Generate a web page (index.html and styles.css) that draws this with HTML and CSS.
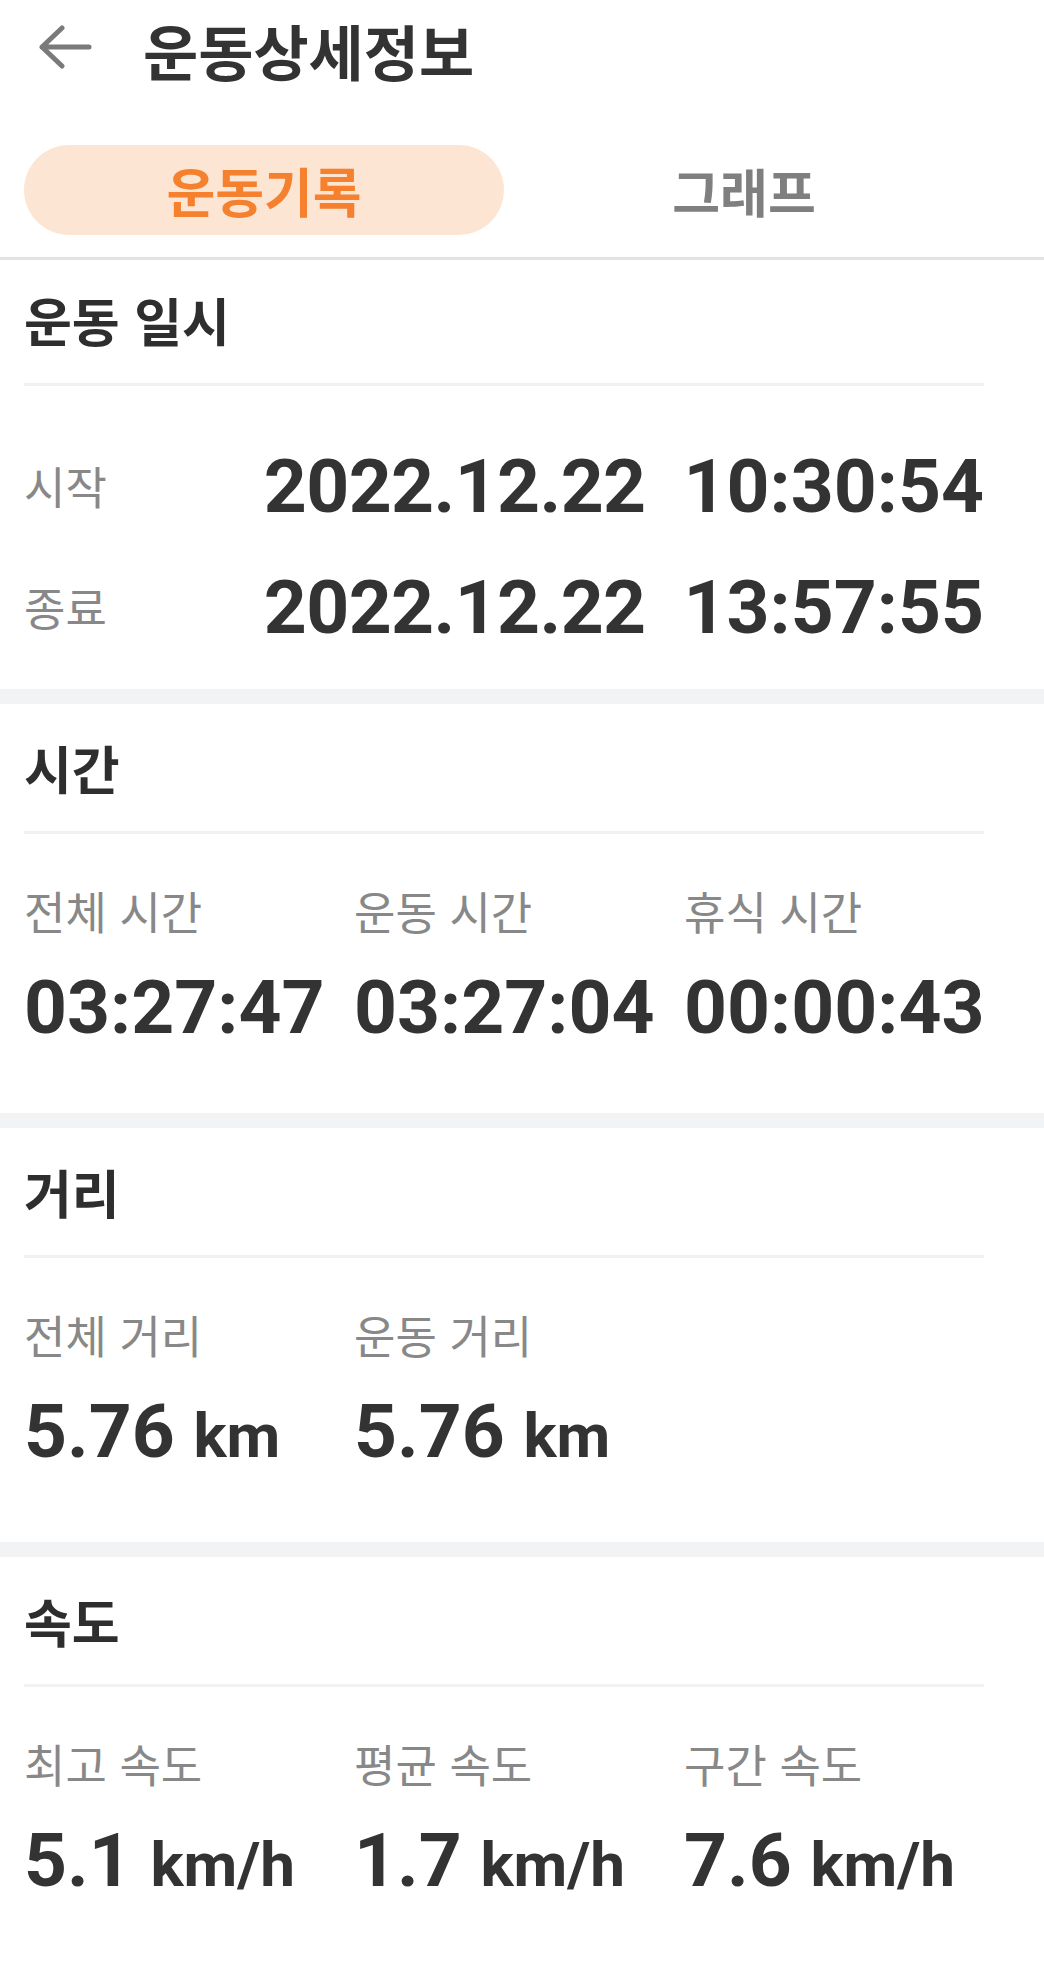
FILE: index.html
```html
<!DOCTYPE html>
<html lang="ko">
<head>
<meta charset="utf-8">
<title>운동상세정보</title>
<link rel="stylesheet" href="styles.css">
</head>
<body>
<div class="page">
  <header class="appbar">
    <svg class="back" width="56" height="44" viewBox="0 0 56 44" aria-hidden="true">
      <path d="M52 22 H5 M25 3 L5 22 L25 41" fill="none" stroke="#7a7a7a" stroke-width="5" stroke-linecap="round" stroke-linejoin="round"/>
    </svg>
    <h1 class="title">운동상세정보</h1>
  </header>

  <nav class="tabs">
    <div class="tab tab--active">운동기록</div>
    <div class="tab">그래프</div>
  </nav>

  <section class="sec sec--first">
    <h2 class="sec-title">운동 일시</h2>
    <div class="divider"></div>
    <div class="dt-row dt-row--first">
      <span class="dt-label">시작</span>
      <span class="dt-value"><span class="dt-date">2022.12.22</span><span>10:30:54</span></span>
    </div>
    <div class="dt-row dt-row--second">
      <span class="dt-label">종료</span>
      <span class="dt-value"><span class="dt-date">2022.12.22</span><span>13:57:55</span></span>
    </div>
  </section>

  <div class="band"></div>

  <section class="sec">
    <h2 class="sec-title">시간</h2>
    <div class="divider"></div>
    <div class="stats">
      <div class="stat">
        <div class="stat-label">전체 시간</div>
        <div class="stat-value">03:27:47</div>
      </div>
      <div class="stat">
        <div class="stat-label">운동 시간</div>
        <div class="stat-value">03:27:04</div>
      </div>
      <div class="stat">
        <div class="stat-label">휴식 시간</div>
        <div class="stat-value">00:00:43</div>
      </div>
    </div>
  </section>

  <div class="band"></div>

  <section class="sec">
    <h2 class="sec-title">거리</h2>
    <div class="divider"></div>
    <div class="stats">
      <div class="stat">
        <div class="stat-label">전체 거리</div>
        <div class="stat-value">5.76 <span class="unit">km</span></div>
      </div>
      <div class="stat">
        <div class="stat-label">운동 거리</div>
        <div class="stat-value">5.76 <span class="unit">km</span></div>
      </div>
    </div>
  </section>

  <div class="band"></div>

  <section class="sec">
    <h2 class="sec-title">속도</h2>
    <div class="divider"></div>
    <div class="stats">
      <div class="stat">
        <div class="stat-label">최고 속도</div>
        <div class="stat-value">5.1 <span class="unit">km/h</span></div>
      </div>
      <div class="stat">
        <div class="stat-label">평균 속도</div>
        <div class="stat-value">1.7 <span class="unit">km/h</span></div>
      </div>
      <div class="stat">
        <div class="stat-label">구간 속도</div>
        <div class="stat-value">7.6 <span class="unit">km/h</span></div>
      </div>
    </div>
  </section>

  <div class="band"></div>
</div>
</body>
</html>
```
FILE: styles.css
```css
html, body {
  margin: 0;
  padding: 0;
  background: #ffffff;
}

body {
  font-family: "Noto Sans CJK KR", "Noto Sans", sans-serif;
  color: #333333;
}

.page {
  width: 1044px;
}

.appbar {
  height: 100px;
  display: flex;
  align-items: center;
  padding-left: 37px;
}

.back {
  display: block;
  flex: none;
  margin-right: 50px;
  margin-top: -6px;
}

.title {
  margin: 0;
  font-size: 60px;
  font-weight: 700;
  line-height: 80px;
  color: #333333;
}

.tabs {
  display: flex;
  margin-top: 45px;
  padding: 0 60px 22px 24px;
  border-bottom: 3px solid #e3e3e3;
}

.tab {
  flex: 1;
  height: 90px;
  display: flex;
  align-items: center;
  justify-content: center;
  border-radius: 45px;
  font-size: 52px;
  font-weight: 700;
  color: #7f7f7f;
}

.tab--active {
  background: #fde5d4;
  color: #f5812e;
  font-size: 53px;
}

.sec {
  padding: 29px 60px 61px 24px;
}

.sec--first {
  padding-top: 25px;
  padding-bottom: 37px;
}

.sec-title {
  margin: 0;
  height: 70px;
  font-size: 52px;
  line-height: 70px;
  font-weight: 700;
  color: #2e2e2e;
}

.divider {
  height: 3px;
  margin-top: 28px;
  background: #f2f2f2;
}

.band {
  height: 15px;
  background: #f2f3f5;
}

.dt-row {
  display: flex;
  align-items: center;
  height: 90px;
}

.dt-row--first {
  margin-top: 55px;
}

.dt-row--second {
  margin-top: 31px;
}

.dt-label {
  flex: 1;
  font-size: 45px;
  line-height: 60px;
  color: #888888;
}

.dt-value {
  display: flex;
  gap: 38px;
  font-family: Roboto, "Liberation Sans", sans-serif;
  font-weight: 700;
  font-size: 75px;
  line-height: 90px;
  color: #333333;
}

.dt-date {
  letter-spacing: -0.6px;
}

.stats {
  display: grid;
  grid-template-columns: 330px 330px 1fr;
  margin-top: 47px;
}

.stat-label {
  font-size: 45px;
  line-height: 60px;
  color: #888888;
  white-space: nowrap;
}

.stat-value {
  margin-top: 21px;
  font-family: Roboto, "Liberation Sans", sans-serif;
  font-weight: 700;
  font-size: 75px;
  line-height: 90px;
  color: #333333;
  white-space: nowrap;
}

.unit {
  font-size: 62px;
}
```
